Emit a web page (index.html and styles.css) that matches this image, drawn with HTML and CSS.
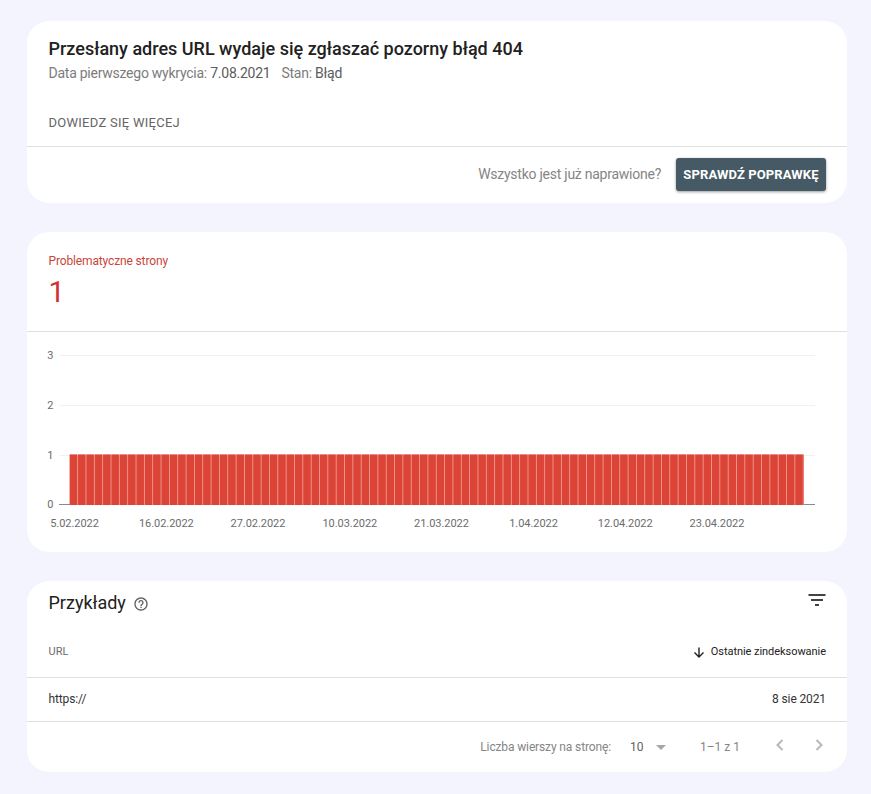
FILE: index.html
```html
<!DOCTYPE html>
<html lang="pl">
<head>
<meta charset="utf-8">
<title>Przesłany adres URL wydaje się zgłaszać pozorny błąd 404</title>
<link rel="stylesheet" href="styles.css">
</head>
<body>
<main class="page">
  <section class="card">
    <div class="issue">
      <h1 class="issue-title">Przesłany adres URL wydaje się zgłaszać pozorny błąd 404</h1>
      <p class="issue-meta"><span>Data pierwszego wykrycia: <b>7.08.2021</b></span><span>Stan: <b>Błąd</b></span></p>
      <a class="more">DOWIEDZ SIĘ WIĘCEJ</a>
    </div>
    <div class="validate">
      <span class="question">Wszystko jest już naprawione?</span>
      <button class="button" type="button"><span>SPRAWDŹ POPRAWKĘ</span></button>
    </div>
  </section>

  <section class="card">
    <div class="metric">
      <div class="metric-label">Problematyczne strony</div>
      <div class="metric-value">1</div>
    </div>
    <svg class="chart" width="820" height="220" viewBox="27 332 820 220">
      <g class="grid">
        <path d="M60 355.5H815M60 405.5H815M60 455.5H815"/>
      </g>
      <path class="axis" d="M59 504.5H815"/>
      <path class="bar-gaps" d="M69.700 479.750H804"/>
      <path class="bars" d="M69.700 479.750H804"/>
      <g class="ticks-y">
        <text x="53.500" y="359">3</text>
        <text x="53.500" y="409">2</text>
        <text x="53.500" y="459">1</text>
        <text x="53.500" y="508">0</text>
      </g>
      <g class="ticks-x">
        <text x="74.5" y="527">5.02.2022</text>
        <text x="166.3" y="527">16.02.2022</text>
        <text x="258" y="527">27.02.2022</text>
        <text x="349.8" y="527">10.03.2022</text>
        <text x="441.5" y="527">21.03.2022</text>
        <text x="533.5" y="527">1.04.2022</text>
        <text x="625.2" y="527">12.04.2022</text>
        <text x="717" y="527">23.04.2022</text>
      </g>
    </svg>
  </section>

  <section class="card">
    <div class="table-top">
      <h2 class="table-title">Przykłady</h2>
      <svg class="help" width="16" height="16" viewBox="0 0 24 24"><path d="M11 18h2v-2h-2v2zm1-16C6.48 2 2 6.48 2 12s4.480 10 10 10 10-4.480 10-10S17.520 2 12 2zm0 18c-4.410 0-8-3.590-8-8s3.590-8 8-8 8 3.590 8 8-3.590 8-8 8zm0-14c-2.210 0-4 1.790-4 4h2c0-1.100.900-2 2-2s2 .900 2 2c0 2-3 1.750-3 5h2c0-2.250 3-2.500 3-5 0-2.210-1.790-4-4-4z"/></svg>
      <svg class="filter" width="18" height="12" viewBox="0 0 18 12"><path d="M.5 0h17v2H.5zM3 5h12v2H3zM7 10h4v2H7z"/></svg>
    </div>
    <div class="row head">
      <span>URL</span>
      <span class="sorted"><svg width="12" height="12" viewBox="0 0 12 12"><path d="M6 1.500V11M1.500 6.500 6 11 10.500 6.500"/></svg>Ostatnie zindeksowanie</span>
    </div>
    <div class="row entry">
      <span class="url">https://</span>
      <span class="date">8 sie 2021</span>
    </div>
    <div class="pager">
      <span class="per-page">Liczba wierszy na stronę:</span>
      <span class="count">10</span>
      <svg class="caret" width="10" height="5" viewBox="0 0 10 5"><path d="M0 0h10L5 5z"/></svg>
      <span class="range">1–1 z 1</span>
      <svg class="prev" width="8" height="12" viewBox="0 0 8 12"><path d="M6.500 1 1.500 6l5 5"/></svg>
      <svg class="next" width="8" height="12" viewBox="0 0 8 12"><path d="m1.500 1 5 5-5 5"/></svg>
    </div>
  </section>
</main>
</body>
</html>
```
FILE: styles.css
```css
* { box-sizing: border-box; }
body {
  margin: 0;
  background: #f3f4fd;
  color: #212121;
  font-family: Roboto, "Liberation Sans", sans-serif;
}
.page {
  display: flex;
  flex-direction: column;
  gap: 29px;
  width: 871px;
  height: 794px;
  padding: 21px 24px 0 27px;
}
.card {
  background: #fff;
  border-radius: 22px;
  overflow: hidden;
}
.card:nth-child(1) { height: 182px; }
.card:nth-child(2) { height: 320px; }
.card:nth-child(3) { height: 191px; }
.issue {
  height: 126px;
  padding: 16px 21.5px 0;
  border-bottom: 1px solid #dfdfdf;
}
.issue-title {
  margin: 0;
  font-size: 18px;
  line-height: 24px;
  font-weight: 500;
  white-space: nowrap;
}
.issue-meta {
  display: flex;
  gap: 11px;
  margin: 2px 0 0;
  font-size: 14px;
  line-height: 20px;
  letter-spacing: -.25px;
  color: #7c7c7c;
}
.issue-meta b { font-weight: 400; color: #5c5c5c; }
.more {
  display: block;
  margin-top: 30px;
  font-size: 13px;
  line-height: 20px;
  letter-spacing: .27px;
  color: #666;
}
.validate {
  display: flex;
  align-items: center;
  justify-content: flex-end;
  gap: 15px;
  height: 55px;
  padding-right: 21px;
}
.question { margin-top: -1px; font-size: 14px; letter-spacing: -.25px; color: #858585; }
.button {
  width: 150px;
  height: 33px;
  padding: 0;
  border: 0;
  border-radius: 3px;
  background: #455a64;
  color: #fff;
  font: 700 13px/33px Roboto, sans-serif;
  letter-spacing: .12px;
  white-space: nowrap;
  box-shadow: 0 1px 3px rgba(0, 0, 0, .4);
}
.metric {
  height: 100px;
  padding: 20px 21.5px 0;
  border-bottom: 1px solid #dfdfdf;
}
.metric-label { font-size: 12px; line-height: 18px; letter-spacing: -.14px; color: #c8453b; }
.metric-value { margin-top: 4px; font-size: 29px; line-height: 36px; color: #d32f2f; }
.chart { display: block; }
.grid path { stroke: #f1f1f1; }
.axis { stroke: #8a8a8a; }
.bar-gaps { stroke: #f2a59d; stroke-width: 50.5; }
.bars { stroke: #db4437; stroke-width: 50.5; stroke-dasharray: 7.54 .8; }
.ticks-y, .ticks-x { font-size: 11px; fill: #6c6c6c; letter-spacing: -.05px; }
.ticks-y { text-anchor: end; }
.ticks-x { text-anchor: middle; }
.table-top {
  display: flex;
  height: 44px;
  padding: 10px 21px 0 21.5px;
}
.table-title { margin: 0; font-size: 18px; line-height: 24px; font-weight: 400; }
.help { margin: 5px 0 0 7.5px; fill: #616161; }
.filter { margin: 3px 0 0 auto; fill: #424242; }
.row {
  display: flex;
  align-items: center;
  justify-content: space-between;
  padding: 0 21px 0 21.5px;
  border-bottom: 1px solid #dfdfdf;
}
.head { height: 53px; font-size: 11px; color: #6a6a6a; }
.sorted { display: flex; align-items: center; gap: 6px; letter-spacing: -.05px; color: #212121; }
.sorted svg { margin-top: 1px; fill: none; stroke: #212121; stroke-width: 1.4; }
.entry { height: 44px; padding-bottom: 2px; font-size: 12px; letter-spacing: -.12px; color: #333; }
.pager {
  display: flex;
  align-items: center;
  justify-content: flex-end;
  height: 50px;
  padding-right: 24px;
  font-size: 12px;
  color: #858585;
}
.per-page { letter-spacing: -.13px; }
.count { margin-left: 19px; color: #616161; }
.caret { margin-left: 12.5px; fill: #a6a6a6; }
.range { margin-left: 34px; }
.prev, .next { margin-top: -5px; fill: none; stroke: #b8b8b8; stroke-width: 2; }
.prev { margin-left: 35.5px; }
.next { margin-left: 31.5px; }
```
